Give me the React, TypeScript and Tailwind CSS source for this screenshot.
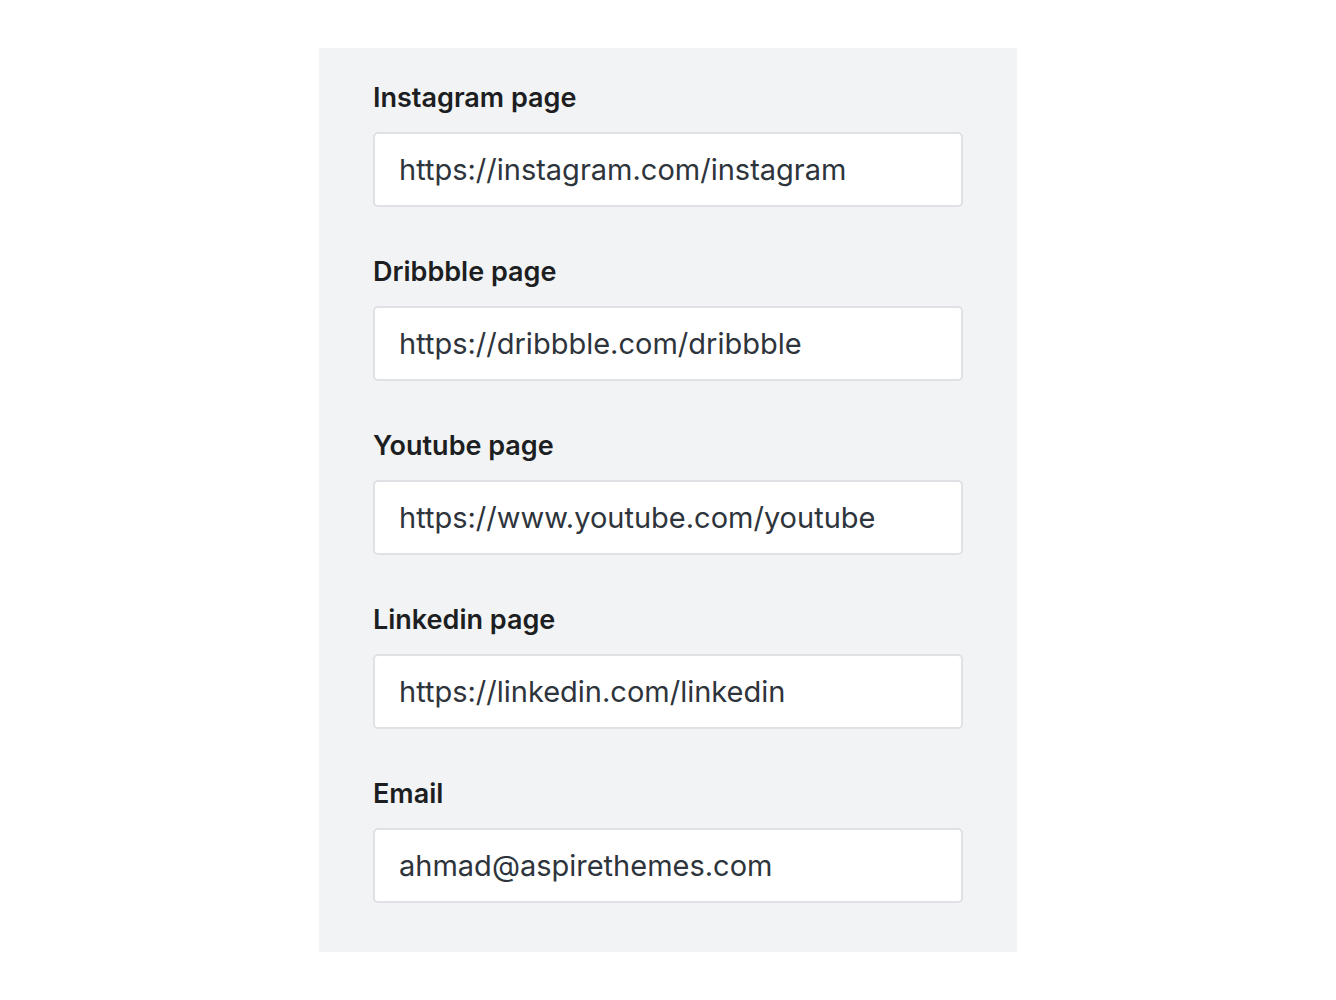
const fields = [
  { label: "Instagram page", value: "https://instagram.com/instagram" },
  { label: "Dribbble page", value: "https://dribbble.com/dribbble" },
  { label: "Youtube page", value: "https://www.youtube.com/youtube" },
  { label: "Linkedin page", value: "https://linkedin.com/linkedin" },
  { label: "Email", value: "ahmad@aspirethemes.com" },
];

export default function App() {
  return (
    <div className="min-h-screen bg-white pt-[48px] font-['Inter',sans-serif]">
      <form className="mx-auto w-[698px] bg-[#f2f3f5] px-[54px] pt-[34px] pb-[49px]">
        {fields.map((f, i) => (
          <div key={f.label} className={i > 0 ? "mt-[49px]" : ""}>
            <label className="block h-[32px] text-[27px] leading-[32px] font-semibold text-[#1c1e21]">
              {f.label}
            </label>
            <input
              readOnly
              value={f.value}
              className="mt-[18px] block h-[75px] w-full rounded-[5px] border-2 border-[#dfe1e4] bg-white px-[24px] text-[29px] text-[#2e343b] outline-none"
            />
          </div>
        ))}
      </form>
    </div>
  );
}
